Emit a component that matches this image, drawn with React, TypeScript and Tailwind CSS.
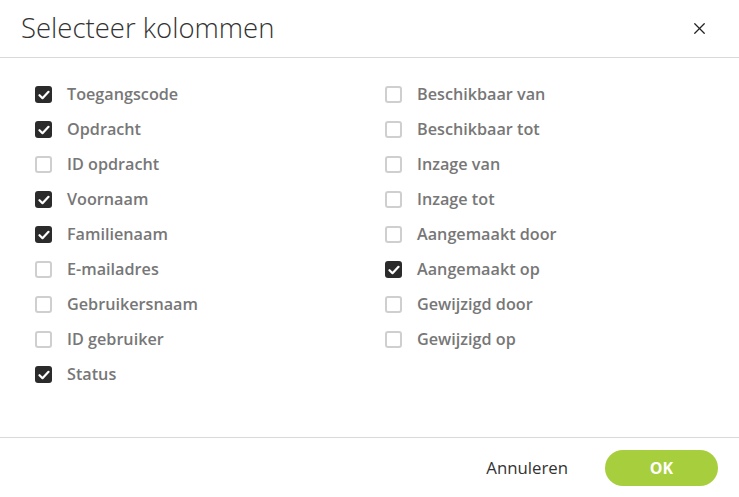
import { X } from "lucide-react";

const LEFT: [string, boolean][] = [
  ["Toegangscode", true],
  ["Opdracht", true],
  ["ID opdracht", false],
  ["Voornaam", true],
  ["Familienaam", true],
  ["E-mailadres", false],
  ["Gebruikersnaam", false],
  ["ID gebruiker", false],
  ["Status", true],
];

const RIGHT: [string, boolean][] = [
  ["Beschikbaar van", false],
  ["Beschikbaar tot", false],
  ["Inzage van", false],
  ["Inzage tot", false],
  ["Aangemaakt door", false],
  ["Aangemaakt op", true],
  ["Gewijzigd door", false],
  ["Gewijzigd op", false],
];

function Row({ label, checked }: { label: string; checked: boolean }) {
  return (
    <div className="flex h-[35px] items-center gap-[15px]">
      {checked ? (
        <span className="flex h-[17px] w-[17px] items-center justify-center rounded-[3px] bg-[#2b2b2b]">
          <svg width="12" height="10" viewBox="0 0 12 10" fill="none">
            <path d="M1.5 5.2l3 3L10.5 1.8" stroke="#fff" strokeWidth="2.2" strokeLinecap="round" strokeLinejoin="round" />
          </svg>
        </span>
      ) : (
        <span className="h-[17px] w-[17px] rounded-[3px] border-2 border-[#cfcfcf] bg-white" />
      )}
      <span className="text-[16.2px] font-semibold text-[#777]">{label}</span>
    </div>
  );
}

export default function App() {
  return (
    <div className="flex h-[497px] w-[739px] flex-col bg-white font-['Open_Sans',sans-serif]">
      <div className="flex h-[58px] items-center justify-between border-b border-[#d9d9d9] pl-[21px] pr-[30px]">
        <h1 className="-mt-[2px] text-[27.5px] font-light text-[#333]">Selecteer kolommen</h1>
        <X size={19} strokeWidth={1.6} className="text-[#222]" />
      </div>
      <div className="flex flex-1 pl-[35px] pt-[19px]">
        <div className="w-[350px]">
          {LEFT.map(([l, c]) => (
            <Row key={l} label={l} checked={c} />
          ))}
        </div>
        <div>
          {RIGHT.map(([l, c]) => (
            <Row key={l} label={l} checked={c} />
          ))}
        </div>
      </div>
      <div className="flex h-[60px] items-center justify-end gap-[37px] border-t border-[#d9d9d9] pr-[21px]">
        <button type="button" className="text-[16.8px] text-[#333]">
          Annuleren
        </button>
        <button
          type="button"
          className="h-[36px] w-[113px] rounded-full bg-[#a7ce3c] text-[16px] font-bold text-white"
        >
          OK
        </button>
      </div>
    </div>
  );
}
